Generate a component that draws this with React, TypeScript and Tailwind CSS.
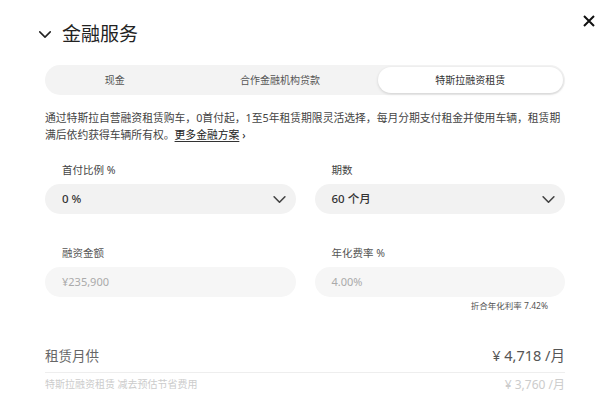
import React from "react";

const font = { fontFamily: '"Noto Sans", "Noto Sans CJK SC", sans-serif' };

function Chevron({ className }: { className?: string }) {
  return (
    <svg viewBox="0 0 16 10" className={className} fill="none" stroke="currentColor" strokeWidth="1.8" strokeLinecap="round" strokeLinejoin="round">
      <path d="M2 2l6 6 6-6" />
    </svg>
  );
}

export default function App() {
  return (
    <div className="w-[600px] h-[395px] overflow-hidden bg-white text-[#222]" style={font}>
      <div className="flex items-center justify-between pl-[38px] pr-[5px] pt-[20px]">
        <div className="flex items-center gap-[10px]">
          <Chevron className="w-[14px] h-[9px] text-[#222]" />
          <span className="text-[19px] leading-[28px] text-[#222]">金融服务</span>
        </div>
        <svg viewBox="0 0 12 12" className="w-[12px] h-[12px] -mt-[26px]" fill="none" stroke="#111" strokeWidth="2">
          <path d="M1 1l10 10M11 1L1 11" />
        </svg>
      </div>

      <div className="ml-[45px] mr-[35px] mt-[17px] h-[30px] rounded-full bg-[#f3f3f3] p-[2px] flex">
        <div className="flex-auto flex items-center justify-center text-[10px] text-[#555]">现金</div>
        <div className="flex-auto flex items-center justify-center text-[10px] text-[#555]">合作金融机构贷款</div>
        <div className="flex-auto flex items-center justify-center text-[10px] text-[#333] bg-white rounded-full shadow-[0_1px_3px_rgba(0,0,0,0.15)]">特斯拉融资租赁</div>
      </div>

      <p className="ml-[45px] mr-[35px] mt-[14px] text-[10.8px] leading-[17px] text-[#444]">
        通过特斯拉自营融资租赁购车，0首付起，1至5年租赁期限灵活选择，每月分期支付租金并使用车辆，租赁期满后依约获得车辆所有权。
        <span className="text-[#222] underline underline-offset-[2px] decoration-[#333]">更多金融方案</span>
        <span className="text-[#222]"> ›</span>
      </p>

      <div className="ml-[45px] mr-[35px] mt-[20px] grid grid-cols-2 gap-x-[19px]">
        <div>
          <div className="pl-[17px] text-[10.5px] leading-[14px] text-[#444]">首付比例 %</div>
          <div className="mt-[7px] h-[30px] rounded-full bg-[#f2f2f2] flex items-center justify-between pl-[17px] pr-[9px]">
            <span className="text-[11.5px] font-medium text-[#333]">0 %</span>
            <Chevron className="w-[15px] h-[9px] text-[#444]" />
          </div>
        </div>
        <div>
          <div className="pl-[17px] text-[10.5px] leading-[14px] text-[#444]">期数</div>
          <div className="mt-[7px] h-[30px] rounded-full bg-[#f2f2f2] flex items-center justify-between pl-[17px] pr-[9px]">
            <span className="text-[11.5px] font-medium text-[#333]">60 个月</span>
            <Chevron className="w-[15px] h-[9px] text-[#444]" />
          </div>
        </div>
        <div className="mt-[32px]">
          <div className="pl-[17px] text-[10.5px] leading-[14px] text-[#555]">融资金额</div>
          <div className="mt-[7px] h-[30px] rounded-full bg-[#f6f6f6] flex items-center pl-[17px]">
            <span className="text-[11px] text-[#aaa]">¥235,900</span>
          </div>
        </div>
        <div className="mt-[32px]">
          <div className="pl-[17px] text-[10.5px] leading-[14px] text-[#555]">年化费率 %</div>
          <div className="mt-[7px] h-[30px] rounded-full bg-[#f6f6f6] flex items-center pl-[17px]">
            <span className="text-[11px] text-[#aaa]">4.00%</span>
          </div>
          <div className="mt-[3px] pr-[17px] text-right text-[8.5px] leading-[12px] text-[#555]">折合年化利率 7.42%</div>
        </div>
      </div>

      <div className="ml-[45px] mr-[35px] mt-[33px] flex items-center justify-between pb-[5px] border-b border-[#eee]">
        <span className="text-[13.5px] text-[#666]">租赁月供</span>
        <span className="text-[14.5px] text-[#555]">¥ 4,718 /月</span>
      </div>
      <div className="ml-[45px] mr-[35px] mt-[3px] flex items-center justify-between">
        <span className="text-[10px] text-[#ccc]">特斯拉融资租赁 减去预估节省费用</span>
        <span className="text-[12px] text-[#ccc]">¥ 3,760 /月</span>
      </div>
    </div>
  );
}
